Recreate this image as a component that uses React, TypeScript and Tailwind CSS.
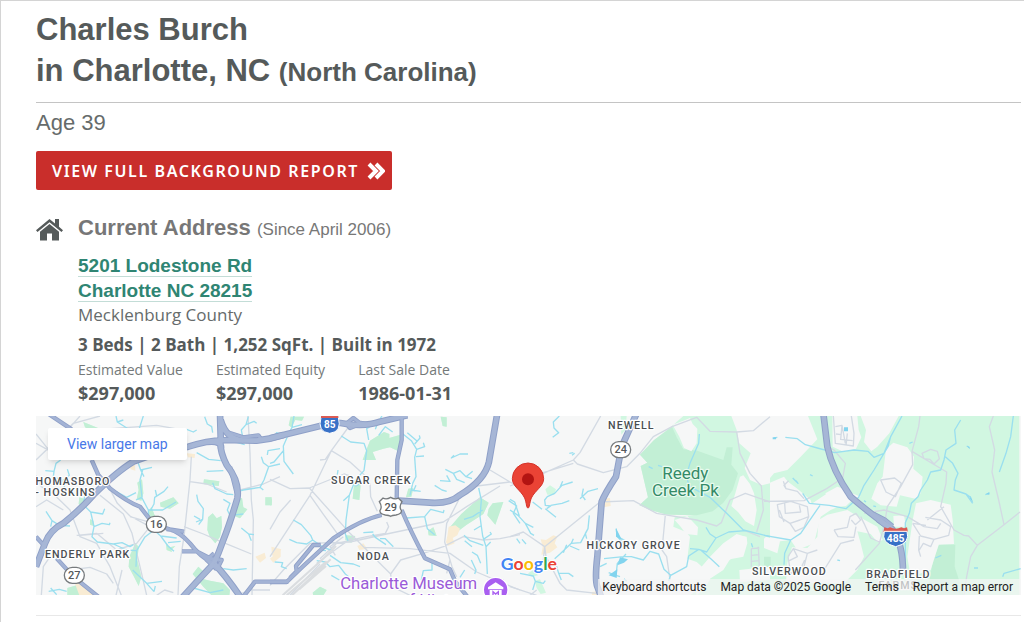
import React from 'react';

interface Tile {
  x: number;
  parks: string[];
  deepParks?: string[];
  land?: string[];
  sand?: string[];
  water: string[];
  minor: string[];
  major: string[];
  thin?: string[];
}

// Map geometry, split in four tiles from west to east
const tiles: Tile[] = [
  {
    x: -18,
    parks: [
      'M522 208L568 214L566 228L520 222Z',
      'M390 278L430 262L446 280L420 296L392 290Z',
      'M534 322L548 310L560 325L574 318L576 350L570 380L556 400L540 382L532 360Z',
      'M618 270L636 264L640 292L652 298L630 325L614 318L622 296Z',
      'M706 262L725 262L725 286L706 286Z',
      'M488 492L505 470L518 482L510 505L540 512L580 520L600 540L598 556L545 556L520 530Z',
      'M298 440L316 400L326 410L322 450L334 500L326 528L312 500L296 470Z',
      'M322 218L336 208L340 250L334 272L320 268L326 240Z',
      'M148 262L165 268L162 296L146 282Z',
      'M180 328L190 332L192 348L180 344Z',
      'M408 400L420 412L436 408L424 420L426 426L410 420Z',
      'M165 52L198 68L204 54L160 36Z',
      'M112 534L140 526L160 556L112 556Z',
      'M350 318L364 290L376 322L368 336Z',
    ],
    sand: [
      'M130 508L150 506L196 556L148 556Z',
      'M676 440L704 428L708 444L690 458Z',
      'M720 446L752 418L752 440L730 458Z',
      'M300 165L315 162L316 182L302 178Z',
      'M470 130L495 132L494 144L474 142Z',
    ],
    water: [
      'M46 182L72 184L78 160L92 150M72 184L70 200L98 212L108 250M98 212L118 196L112 178',
      'M258 18L262 36L300 60M262 36L280 30',
      'M340 18L328 55L334 60',
      'M524 20L532 42L545 50L548 68M470 58L490 66L500 60',
      'M590 60L602 92L644 104M655 20L648 44L634 60L640 92M648 44L672 34L680 40',
      'M500 128L536 148L572 152M530 184L580 182',
      'M750 116L714 122L712 135M750 162L716 170M716 170L702 210L690 232L640 240L618 246M716 170L700 158L694 140M690 232L700 240',
      'M548 218L555 236L590 252L610 254M580 268L600 280L592 300L600 316L640 312',
      'M500 254L504 274L520 296L518 328L498 336M518 328L506 344M492 318L510 328',
      'M236 238L262 246L290 262L318 248M318 270L335 262L355 300L398 300L438 276M355 300L356 330M338 180L330 210L336 262M318 140L332 180L366 172M332 180L342 200',
      'M414 230L402 244L374 262L372 282L362 300M376 240L380 258',
      'M48 304L66 332L88 346L120 348M66 332L62 350',
      'M164 258L160 284L182 306L192 350L186 380L202 396L250 402L290 420L318 422M182 306L218 312L224 296M192 350L216 340L238 344L240 338M250 402L276 398L300 410L310 404',
      'M398 350L372 360L344 382L320 422L318 470M372 360L392 378L414 408L432 424M392 378L440 384M414 398L452 394',
      'M56 544L88 538L110 544M62 534L80 554M308 480L350 520L372 545M350 520L396 514M372 545L376 528',
      'M580 476L610 480L650 476M634 354L656 372L672 374M656 372L664 392M490 534L540 548L580 540',
    ],
    minor: [
      'M18 72L58 122L18 100M58 122L150 18M18 150L80 90L130 40L210 18M190 60L380 46L470 62',
      'M484 140L480 210L462 380L448 470L444 556',
      'M480 215L530 222L590 246M462 350L520 372L566 392M566 392L664 432',
      'M654 18L660 130L664 270L670 330L666 556',
      'M750 200L700 222L630 240M18 196L34 230L68 250L120 300L150 380L200 400L240 470L274 556',
      'M236 230L262 280L300 318L360 350L320 400L260 420L200 370L140 376',
      'M210 256L280 312L306 370L330 470L350 556M120 480L180 472L230 492L250 520',
      'M150 376L220 370M34 556L40 470L60 440M380 556L404 540L430 548M276 480L258 556',
      'M18 290L50 270L100 300M300 320L350 334M620 556L660 540L720 540',
    ],
    major: [
      'M570 10L572 80Q566 120 590 165Q630 215 622 265Q600 340 580 390Q566 430 552 460',
      'M552 460Q500 515 455 565M552 460Q590 500 634 565',
      'M18 470L45 400Q60 360 100 340Q150 300 190 255Q260 185 310 155L380 130L475 110Q530 92 580 90L680 92Q720 88 760 75',
      'M572 30Q590 90 640 92M572 120Q580 90 530 96',
    ],
    thin: [
      'M185 150L205 195L240 235Q290 275 330 290L365 335L410 355Q450 365 480 400Q510 440 550 460',
      'M56 12L125 58M18 380L45 410M80 445L130 500L205 560M640 560L675 515L775 515',
      'M410 357L462 365M456 424L500 424L550 450M572 60L640 82L685 76L695 90',
      'M600 170L620 250M552 430L530 450L560 478M540 445L575 450L560 480',
    ],
  },
  {
    x: 702,
    parks: [
      'M300 92L342 66L358 72L358 84L392 74L386 124L360 112L340 116L308 126L318 150L278 150L290 118Z',
      'M512 20L530 22L530 50L518 48Z',
      'M252 226L272 224L268 270L248 266Z',
      'M630 262L656 278L640 312L590 344L556 370L536 356L574 312Z',
      'M668 280L700 276L676 344L652 316L656 296Z',
      'M474 362L490 352L500 378L476 376Z',
      'M226 376L256 378L244 398L226 390Z',
      'M0 262L6 270L4 286L0 286Z',
      'M128 548L150 530L170 540L160 556L130 556Z',
      'M62 20L102 20L96 32L76 30L64 52L56 46Z',
      'M415 236L430 234L424 260L408 262Z',
    ],
    sand: [
      'M536 350L556 346L570 356L562 376L548 384L554 400L534 408L528 396L532 378Z',
      'M4 410L34 418L16 440L6 436Z',
      'M262 408L280 400L292 416L268 420Z',
    ],
    water: [
      'M72 18L66 52L52 80L40 108L42 154L70 192M52 80L20 68L8 88M42 120L12 156L0 160M66 52L96 44',
      'M214 78L242 96L282 100L290 122L282 182L256 210L238 256L228 330L226 372L234 392M242 210L258 228L278 216M238 256L220 272',
      'M336 18L324 36L290 56L296 90M324 36L316 58M326 76L346 50L368 66',
      'M396 70L424 92L440 118L434 142L438 200L428 220L420 256M440 118L464 110L460 98M438 140L462 138M434 102L450 84L448 76M424 240L452 244M438 226L430 244M412 68L440 92',
      'M594 132L570 132L544 144L552 136',
      'M526 178L550 190L570 182L588 200L608 184M550 190L560 208L584 218M494 226L516 240L530 244M510 212L540 214L530 196M588 200L606 206',
      'M626 234L634 270L630 320L638 378L648 410L652 492M638 300L608 320L582 328M632 348L612 360M640 388L664 372L660 366M648 410L662 396M582 376L600 392L640 406M584 392L606 410M606 426L622 436L632 460',
      'M70 330L94 344L122 376L128 390L110 402L80 398L58 388M128 390L160 412L182 420',
      'M396 312L410 324L464 320L472 356L494 374M464 320L482 298L520 308L522 300',
      'M308 372L316 382L348 404M330 386L346 386L370 410M280 368L310 366',
      'M14 456L38 458L34 470L50 476M140 452L166 456L180 470L206 466L226 492L236 500M180 436L212 458L250 462L270 470M184 496L208 510M150 420L168 422',
      'M486 456L486 480L460 482L454 510M604 450L618 480L614 492M716 272L740 288L730 310L750 340',
      'M204 180L202 194M584 480L570 502',
    ],
    minor: [
      'M240 45L184 122L120 256L0 440M0 208L60 236L118 234L222 192L240 198M150 150L166 148L184 122',
      'M184 122L240 156L284 196M120 256L158 310L210 382M118 234L240 370L282 412',
      'M0 526L40 480L120 400L240 396L350 372L520 336L590 290L690 228',
      'M300 220L302 260L322 304M350 336L356 350L346 370L290 380L200 400',
      'M282 412L340 470L362 492L392 450L460 430L520 410L580 380L640 390L690 386L750 374',
      'M282 412L420 416L540 430L620 486L700 520L750 540',
      'M566 270L530 340L524 396L546 470L560 500',
      'M660 180L720 216L750 232M620 228L720 216M362 492L366 530L420 556',
      'M530 490L540 450M0 358L30 306L62 270',
      'M140 460L250 380M150 446L200 400L220 400M60 556L150 462M196 436L180 410L220 380',
    ],
    major: [
      'M0 85L150 48Q180 32 230 42Q290 50 330 35L412 16',
      'M385 272L480 278Q540 282 570 255Q645 210 657 155L682 10',
    ],
    thin: [
      'M395 18L395 90L382 150L380 272',
      'M0 516L50 516L100 468L190 385Q270 330 335 315',
      'M60 504L80 484L78 468L130 405L152 405',
      'M395 300Q420 360 465 445L540 478L556 515L592 560',
      'M230 40L250 24L268 38L300 44M230 42L240 54L270 42',
    ],
  },
  {
    x: 1422,
    parks: [
      'M486 48L520 18L780 18L780 556L540 556L600 510L580 470L596 456L660 450L706 380L680 372L640 400L600 440L576 470L560 456L532 446L540 380L528 366L490 350L494 322L560 314L388 286L414 262L392 168L412 158L390 134L430 92Z',
      'M106 238L120 226L138 238L132 254L112 254Z',
      'M74 512L90 508L108 548L92 552L80 534Z',
      'M332 18L350 18L346 60L334 74Z',
      'M54 490L70 480L84 496L66 500Z',
    ],
    deepParks: [
      'M432 90L486 50L500 82L520 118L562 122L640 150L650 112L668 112L664 164L684 190L668 240L640 278L608 304L560 316L470 314L420 300L388 286L414 262L392 168L412 158L390 134Z',
    ],
    land: [
      'M488 44L520 32L540 24L548 42L562 56L560 100L544 124L522 114L508 80Z',
      'M664 18L680 60L688 100L722 130L704 174L720 210L756 226L780 220L780 18Z',
      'M700 196L720 222L732 250L740 300L732 348L706 334L684 306L664 288L676 250L690 200Z',
      'M494 330L532 318L564 352L562 376L528 372L512 350Z',
      'M580 464L640 402L682 376L710 380L712 400L700 440L660 448L640 480L600 506L588 530L560 556L550 500Z',
      'M688 480L780 470L780 510L690 516Z',
    ],
    sand: [
      'M92 388L108 390L130 376L142 380L134 400L142 412L120 428L94 434L98 410Z',
      'M276 266L300 264L302 288L280 292Z',
      'M245 546L262 544L262 556L246 556Z',
    ],
    water: [
      'M148 18L130 36L132 54L146 68L128 82',
      'M178 130L190 128M186 136L194 130',
      'M188 216L156 226L134 250L112 260L104 270L106 286L122 288L110 296M158 214L150 232M122 286L156 280L178 272M106 296L138 322M68 276L96 298',
      'M264 236L234 244L210 266M220 236L216 256L226 270',
      'M0 300L24 316L46 340L62 370L72 376M0 268L14 276L28 318M46 340L70 352',
      'M238 316L234 356L212 398L184 400L150 432L134 446M234 356L226 370L230 386M184 400L190 386M180 408L208 420M170 404L160 428',
      'M318 356L322 380L362 400M322 380L348 410M282 446L340 440L364 440L400 450L420 424L446 432L462 478L482 496L530 470L536 438L566 418L590 426L618 384L656 366L706 362M348 432L322 460L318 496L296 488M318 496L330 500M566 418L540 416M572 420L604 448L628 470M588 352L600 372L618 384M482 496L476 512',
      'M568 72L566 100L540 160L528 200L540 230L600 262L650 310L700 360L780 380',
      'M416 170L428 176M444 166L456 170',
      'M136 456L146 490L154 510M146 490L176 490L190 500M30 490L70 498L76 514L68 540M76 514L100 520L106 512M20 386L30 400M36 388L48 402',
      'M290 460L270 470M342 506L350 514M724 400L728 412',
    ],
    minor: [
      'M272 18L210 128L190 150L100 190L0 228M190 150L202 162L280 188L350 170L390 130L430 80L486 50L560 22L600 64L680 66L730 62L780 20',
      'M104 410L270 276L370 272L440 310L560 330L620 348L634 338L660 270L706 250L780 276',
      'M0 380L40 366L104 410L108 440L150 520L170 540L260 550',
      'M466 314L456 420L470 440L480 510M104 410L100 450M60 200L190 160',
      'M680 66L690 130L720 190L754 228L760 300L740 366M700 360L750 380',
      'M724 416L724 470M745 410L748 470M724 416L748 414M724 436L748 434M724 454L748 452',
      'M80 540L60 556M0 530L80 556',
    ],
    major: ['M380 10L335 110L318 200Q285 250 275 275L262 440Q254 510 262 530L275 565'],
  },
  {
    x: 2184,
    parks: [
      'M132 18L766 18L766 556L0 556L0 400L80 390L100 420L150 400L170 320L200 300L290 260L240 240L190 250L130 290L60 200L0 226L30 190L70 180L110 140L160 88Z',
    ],
    deepParks: ['M508 448L526 402L574 404L572 470L600 556L490 556L500 490Z', 'M0 440L20 440L20 470L0 476Z'],
    land: [
      'M205 18L280 18L284 60L292 82L276 116L240 126L206 110Z',
      'M290 18L404 18L376 70L340 110L322 124L300 96L306 60Z',
      'M366 118L388 98L430 112L450 140L448 176L476 200L470 250L454 266L408 256L398 290L350 286L322 266L340 220L356 200Z',
      'M184 250L220 230L250 240L264 270L246 288L210 292Z',
      'M30 236L60 206L100 236L140 270L150 310L120 360L80 376L40 356L20 300Z',
      'M164 330L190 314L250 300L276 316L340 350L356 390L340 396L320 372L280 364L290 400L300 440L280 480L240 520L66 520L70 460L84 412L130 414L160 380Z',
      'M388 318L420 316L426 350L390 350Z',
      'M456 280L500 270L560 284L566 330L570 402L524 404L500 480L440 500L430 440L446 330Z',
      'M6 380L48 394L40 430L0 414L0 386Z',
    ],
    water: [
      'M30 84L40 82M64 82L100 86L124 104L160 114L212 128L270 120L312 124L330 142L360 130L380 80L414 18M380 80L372 110L330 180L300 226L284 262L246 296L196 286L136 280L116 250M168 286L110 370L80 390L0 376M80 390L62 430L60 464',
      'M86 204L102 220L96 212M138 194L146 198M436 100L446 96M300 272L306 276M328 288L336 290M220 450L228 452',
      'M590 30L572 60L576 100L546 120L540 150L530 180L500 186L490 210L470 240L462 260L442 280L436 310L424 338L424 480M544 140L566 160L582 190L574 210L570 240L606 252L626 280M606 252L620 262',
      'M748 18L740 80L726 130L706 186M608 108L616 112M664 254L676 250M630 474L642 474M770 476L720 490L716 500M514 444L532 436',
    ],
    minor: [
      'M468 18L464 50L444 124L548 186L546 220L530 290L570 360L600 376L614 378L640 406L720 344L768 306',
      'M444 124L446 164L410 230L370 290L362 340L346 400L274 480M640 406L620 440L608 500L600 556',
      'M688 18L676 50L692 120L684 186L704 270L720 344',
      'M192 110L210 120L244 160L236 204L188 236L120 272L0 274',
      'M208 18L214 100L268 108L270 70L262 18M214 50L234 46L230 88L266 92M234 46L244 100M216 72L232 74M250 70L246 106',
      'M350 210L392 204L412 220L394 260L366 246Z',
      'M474 130L500 118L520 124L526 146L510 162L498 148L480 146Z',
      'M58 214L66 236L100 244L120 266M66 236L60 226L74 212M40 284L80 274L130 290L134 320L108 330L78 340L46 320ZM62 280L64 310L110 306L106 286M78 340L94 364L120 352L134 320M46 300L60 336',
      'M72 440L88 416L130 430L160 420M88 416L100 440L76 452M130 430L120 470M72 440L80 490L110 476L122 450M210 360L250 352L258 320L276 310L290 330L274 344L262 330M210 360L222 380L270 382L276 350M290 320L300 340L320 384L346 396M180 480L230 400L270 390M300 310L360 300L430 320L480 350',
      'M490 330L540 290M484 322L530 330L560 350L554 376L510 388L470 378L446 340M480 350L520 356L530 340M466 378L464 420L470 440M510 388L500 410L478 400L466 420M446 340L486 346',
    ],
    major: ['M178 10L190 110Q205 180 260 260Q330 320 385 358Q418 400 417 495'],
    thin: ['M330 312L362 328L386 348M340 330L370 352'],
  },
];

type LayerKey = 'parks' | 'deepParks' | 'land' | 'sand' | 'water' | 'minor' | 'major' | 'thin';

interface LayerProps {
  name: LayerKey;
  fill?: string;
  stroke?: string;
  width?: number;
}

const Layer: React.FC<LayerProps> = ({ name, fill = 'none', stroke = 'none', width = 0 }) => (
  <g fill={fill} stroke={stroke} strokeWidth={width} strokeLinejoin="round">
    {tiles.map((tile) => (
      <path key={tile.x} transform={`translate(${tile.x} -18)`} d={(tile[name] ?? []).join('')} />
    ))}
  </g>
);

const places = [
  { text: 'THOMASBORO', x: -24, y: 207, anchor: 'start' },
  { text: '- HOSKINS', x: -2, y: 240, anchor: 'start' },
  { text: 'ENDERLY PARK', x: 155, y: 425, anchor: 'middle' },
  { text: 'SUGAR CREEK', x: 1006, y: 203, anchor: 'middle' },
  { text: 'NODA', x: 1012, y: 432, anchor: 'middle' },
  { text: 'NEWELL', x: 1786, y: 39, anchor: 'middle' },
  { text: 'HICKORY GROVE', x: 1793, y: 400, anchor: 'middle' },
  { text: 'SILVERWOOD', x: 2260, y: 476, anchor: 'middle' },
  { text: 'BRADFIELD', x: 2587, y: 487, anchor: 'middle' },
  { text: 'FARMS', x: 2587, y: 520, anchor: 'middle' },
] as const;

const routes = [
  { number: '16', x: 361, y: 325 },
  { number: '27', x: 115, y: 478 },
  { number: '24', x: 1754, y: 101 },
];

const MapDrawing: React.FC = () => (
  <svg
    viewBox="0 0 2955 537"
    preserveAspectRatio="xMidYMid slice"
    className="block h-full w-full"
    fontFamily="Roboto, sans-serif"
    role="img"
    aria-label="Map of Charlotte"
  >
    <rect width="2955" height="537" fill="#f6f7f7" />
    <Layer name="parks" fill="#d1f7e1" />
    <Layer name="deepParks" fill="#c2efd5" />
    <Layer name="land" fill="#f6f7f7" />
    <g fill="#c2efd5">
      {tiles.slice(0, 2).map((tile) => (
        <path key={tile.x} transform={`translate(${tile.x} -18)`} d={tile.parks.join('')} />
      ))}
    </g>
    <Layer name="sand" fill="#f9ecd4" />
    <Layer name="minor" stroke="#d3dae3" width={4} />
    <Layer name="water" stroke="#9adfef" width={4} />
    <g fill="#82d4ee">
      <path d="M2424 34h12v12h-12zM2210 64h10v6h-10zM2850 234l10 -6v8zM2793 90l8 4v6zM1740 336l18 36-18-10zM2804 240l8 20-10-12z" />
      <path d="M1752 424l24 6-12 10-20 8zM1744 460l-2 26-24-8z" />
    </g>
    {/* Rail yard */}
    <g stroke="#dadde0" strokeWidth="6" fill="none">
      <path d="M740 538L860 430L900 390M752 538L872 436M768 538L884 430M790 520L870 450" />
    </g>
    <Layer name="thin" stroke="#8fa0c8" width={13} />
    <Layer name="major" stroke="#8fa0c8" width={20} />
    <Layer name="thin" stroke="#a3b3d5" width={8} />
    <Layer name="major" stroke="#a6b6d6" width={14} />

    {/* Interstate shields */}
    <g textAnchor="middle" fontWeight="700" fill="#fff">
      <path d="M855 4Q843 48 881 52Q919 48 907 4Z" fill="#3871c7" stroke="#fff" strokeWidth="3" />
      <path d="M855 0H907V6H855Z" fill="#db5b54" />
      <text x="881" y="36" fontSize="30">85</text>
      <path d="M2545 346Q2534 382 2579 392Q2624 382 2613 346Z" fill="#3871c7" stroke="#fff" strokeWidth="3" />
      <path d="M2545 334Q2556 339 2562 334Q2579 342 2596 334Q2604 339 2613 334L2616 348H2542Z" fill="#db5b54" />
      <path d="M2543 346H2615" stroke="#fff" strokeWidth="3" />
      <text x="2579" y="377" fontSize="31">485</text>
    </g>

    {/* State and US routes */}
    {routes.map((route) => (
      <g key={route.number}>
        <rect x={route.x - 30} y={route.y - 24} width="60" height="48" rx="24" fill="#fff" stroke="#777b7e" strokeWidth="4" />
        <text x={route.x} y={route.y + 11} fontSize="33" fontWeight="500" textAnchor="middle" fill="#55595c">
          {route.number}
        </text>
      </g>
    ))}
    <path
      d="M1041 246Q1051 252 1064 244Q1077 252 1087 246L1098 257Q1088 273 1096 283Q1098 294 1080 297Q1068 298 1064 301Q1060 298 1048 297Q1030 294 1032 283Q1040 273 1030 257Z"
      fill="#fff"
      stroke="#777b7e"
      strokeWidth="4"
    />
    <text x="1064" y="284" fontSize="33" fontWeight="500" textAnchor="middle" fill="#55595c">29</text>

    {/* Neighbourhoods */}
    <g fontSize="32" fontWeight="500" fill="#4a4e52" stroke="#fff" strokeWidth="7" strokeLinejoin="round" paintOrder="stroke" className="tracking-[3px]">
      {places.map((place) => (
        <text key={place.text} x={place.x} y={place.y} textAnchor={place.anchor}>
          {place.text}
        </text>
      ))}
    </g>

    <g fontSize="51" textAnchor="middle" fill="#348a67" stroke="#e7fbef" strokeWidth="7" strokeLinejoin="round" paintOrder="stroke">
      <text x="1948" y="189">Reedy</text>
      <text x="1948" y="240">Creek Pk</text>
    </g>

    <g fontSize="50" textAnchor="middle" fill="#9a5bd8" stroke="#fff" strokeWidth="7" strokeLinejoin="round" paintOrder="stroke">
      <text x="1118" y="520">Charlotte Museum</text>
      <text x="1200" y="570">of History</text>
    </g>
    <circle cx="1379" cy="521" r="37" fill="#a95ff0" stroke="#fff" strokeWidth="4" />
    <path d="M1356 514L1379 499L1402 514V520H1356ZM1361 522H1397V544H1361Z" fill="#fff" />
    <path d="M1371 540V527L1379 534L1387 527V540" fill="none" stroke="#a95ff0" strokeWidth="4" />

    {/* Pin */}
    <path
      d="M1476 276C1471 276 1472 262 1466 246C1454 222 1429 211 1429 188A47 47 0 0 1 1523 188C1523 211 1498 222 1486 246C1480 262 1481 276 1476 276Z"
      fill="#ea4335"
      stroke="#d5342b"
      strokeWidth="3"
    />
    <circle cx="1476" cy="190" r="18" fill="#b31412" />

    <text x="1394" y="461" fontSize="53" fontFamily="Lato, sans-serif" fontWeight="700" stroke="#fff" strokeWidth="6" paintOrder="stroke">
      <tspan fill="#4285f4">G</tspan>
      <tspan fill="#ea4335">o</tspan>
      <tspan fill="#fbbc04">o</tspan>
      <tspan fill="#4285f4">g</tspan>
      <tspan fill="#34a853">l</tspan>
      <tspan fill="#ea4335">e</tspan>
    </text>
  </svg>
);

const stats = [
  { label: 'Estimated Value', value: '$297,000' },
  { label: 'Estimated Equity', value: '$297,000' },
  { label: 'Last Sale Date', value: '1986-01-31' },
];

const App: React.FC = () => {
  return (
    <main className="min-h-screen border-l border-t border-[#d4d4d4] bg-white pl-[35px] pr-[3px] font-['Liberation_Sans',Arial,sans-serif] text-[#555a5a]">
      {/* Name */}
      <h1 className="border-b border-[#c4c4c4] pb-[9px] pt-2 text-[31px] font-bold leading-[41px]">
        Charles Burch
        <br />
        in Charlotte, NC <span className="text-[26px]">(North Carolina)</span>
      </h1>
      <p className="pt-1 text-[22px] leading-8 text-[#666b6b]">Age 39</p>

      <button
        type="button"
        className="mt-3 flex h-[39px] items-center gap-2 rounded-xs bg-[#c92e2b] pl-4 pr-[7px] font-['Noto_Sans',sans-serif] text-base font-semibold uppercase tracking-widest text-white"
      >
        View Full Background Report
        <svg viewBox="0 0 18 18" className="h-[18px] w-[18px]" fill="none" stroke="#fff" strokeWidth="4" aria-hidden="true">
          <path d="M2 2L9 9L2 16M9 2L16 9L9 16" />
        </svg>
      </button>

      {/* Current address */}
      <section className="mt-6 flex gap-[15px]">
        <svg viewBox="0 0 27 23" className="mt-1 h-[23px] w-[27px] shrink-0" fill="#555a5a" aria-hidden="true">
          <path d="M13.500 1L0 12.200L1.500 14L13.500 4.200L25.500 14L27 12.200L23 8.800V1H19V5.600Z" />
          <path d="M13.500 6L4 13.700V22.500H11V15.500H16V22.500H23V13.700Z" />
        </svg>
        <div>
          <h2 className="text-[22px] font-bold leading-7 text-[#777]">
            Current Address <span className="text-[17px] font-normal">(Since April 2006)</span>
          </h2>
          <a href="#address" className="mt-2 block w-fit text-[19px] font-bold leading-5 text-[#2f8573]">
            <span className="block border-b border-[#c3ddd7] pt-1">5201 Lodestone Rd</span>
            <span className="block border-b border-[#c3ddd7] pt-1">Charlotte NC 28215</span>
          </a>
          <div className="font-['Open_Sans',sans-serif]">
            <p className="text-[17px] leading-[26px] text-[#666b6b]">Mecklenburg County</p>
            <p className="mt-1 text-[17px] font-bold leading-[26px]">3 Beds | 2 Bath | 1,252 SqFt. | Built in 1972</p>
            <dl className="flex gap-[33px]">
              {stats.map((stat) => (
                <div key={stat.label}>
                  <dt className="text-sm leading-6 text-[#747979]">{stat.label}</dt>
                  <dd className="text-lg font-bold leading-[22px]">{stat.value}</dd>
                </div>
              ))}
            </dl>
          </div>
        </div>
      </section>

      {/* Map */}
      <section className="relative mt-3 h-[179px] overflow-hidden font-['Roboto',sans-serif]">
        <MapDrawing />
        <a
          href="#map"
          className="absolute left-3 top-3 rounded-xs bg-white px-[19px] py-1 text-sm leading-6 text-[#4778e8] shadow-md"
        >
          View larger map
        </a>
        <div className="absolute bottom-0 right-0 flex gap-[14px] bg-[#f5f5f5]/70 pl-1 pr-2 text-xs leading-4 text-[#222]">
          <button type="button">Keyboard shortcuts</button>
          <span>Map data ©2025 Google</span>
          <a href="#terms">Terms</a>
          <a href="#report">Report a map error</a>
        </div>
      </section>
      <hr className="mt-5 border-[#e8e8e8]" />
    </main>
  );
};

export default App;
